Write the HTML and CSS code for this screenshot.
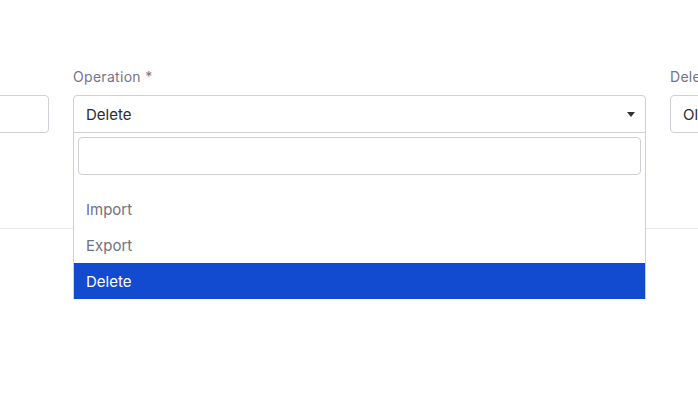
FILE: index.html
```html
<!DOCTYPE html>
<html>
<head>
<meta charset="utf-8">
<link rel="stylesheet" href="styles.css">
</head>
<body>
<div class="page">
  <div class="form-row">
    <div class="field">
      <label class="label">Source *</label>
      <div class="input"></div>
    </div>
    <div class="field">
      <label class="label">Operation *</label>
      <div class="select-wrap">
        <div class="select open">
          <span class="value">Delete</span>
          <span class="caret"></span>
        </div>
        <div class="dropdown">
          <div class="search"><div class="search-input"></div></div>
          <ul class="options">
            <li class="option">Import</li>
            <li class="option">Export</li>
            <li class="option active">Delete</li>
          </ul>
        </div>
      </div>
    </div>
    <div class="field">
      <label class="label">Delete mode *</label>
      <div class="input"><span class="value">Older than</span></div>
    </div>
  </div>
  <div class="divider"></div>
</div>
</body>
</html>
```
FILE: styles.css
```css
html, body { margin: 0; padding: 0; background: #fff; overflow: hidden; }
body { font-family: Inter, "Noto Sans", sans-serif; color: #333; }
.page { width: 698px; height: 404px; overflow: hidden; }
.form-row {
  display: flex;
  gap: 24px;
  margin-left: -524px;
  padding-top: 68px;
}
.field { width: 573px; flex: none; display: flex; flex-direction: column; }
.label {
  font-size: 14px;
  line-height: 18px;
  color: #75738a;
  margin-bottom: 9px;
  letter-spacing: 0.3px;
}
.input, .select {
  box-sizing: border-box;
  height: 38px;
  border: 1px solid #cfcfd8;
  border-radius: 4px;
  display: flex;
  align-items: center;
  padding: 0 12px;
}
.value { font-size: 15px; color: #2b2b33; letter-spacing: 0; }
.select-wrap { position: relative; }
.select.open { border-bottom-left-radius: 0; border-bottom-right-radius: 0; }
.caret {
  margin-left: auto;
  margin-right: -2px;
  width: 0; height: 0;
  border-left: 4px solid transparent;
  border-right: 4px solid transparent;
  border-top: 5px solid #333;
}
.dropdown {
  position: absolute;
  left: 0; right: 0; top: 37px;
  background: #fff;
  border: 1px solid #cfcfd8;
  border-bottom: none;
  box-sizing: border-box;
  z-index: 2;
}
.search { padding: 4px 4px 16px; }
.search-input {
  height: 38px;
  box-sizing: border-box;
  border: 1px solid #cfcfd8;
  border-radius: 4px;
}
.options { list-style: none; margin: 0; padding: 0; }
.option {
  height: 36px;
  display: flex;
  align-items: center;
  padding: 0 12px;
  font-size: 15px;
  color: #72717f;
  letter-spacing: 0;
}
.option.active { background: #124ad0; color: #fff; }
.divider { margin-top: 95px; height: 1px; background: #e7e7ea; }
```
